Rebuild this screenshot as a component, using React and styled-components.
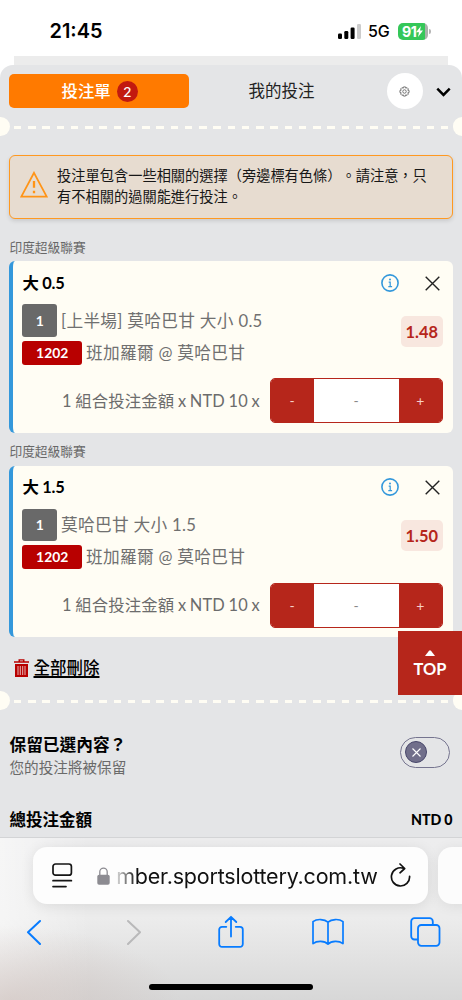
import React from "react";
import styled, { createGlobalStyle } from "styled-components";

const GlobalStyle = createGlobalStyle`
  *, *::before, *::after { box-sizing: border-box; }
  body { margin: 0; background: #fff; }
  button, input { font: inherit; border: 0; padding: 0; background: none; }
  svg { display: block; flex: none; }
`;

const cream = "#fffdf4";
const red = "#b6261b";

const Screen = styled.main`
  position: relative;
  width: 462px;
  height: 1000px;
  overflow: hidden;
  display: flex;
  flex-direction: column;
  background: #fff;
  color: #000;
  font-family: Lato, "Noto Sans CJK TC", sans-serif;
`;

const StatusBar = styled.header`
  height: 56px;
  flex: none;
  display: flex;
  justify-content: space-between;
  align-items: flex-start;
  padding: 18px 31px 0 49.5px;
  font-family: Inter, sans-serif;
`;

const Clock = styled.time`
  font-size: 19.9px;
  line-height: 26px;
  font-weight: 600;
  letter-spacing: 0;
`;

const StatusRight = styled.div`
  display: flex;
  align-items: center;
  height: 26px;
`;

const Network = styled.span`
  width: 22px;
  margin: 0 8px 0 7.5px;
  font-size: 16px;
  font-weight: 500;
  letter-spacing: -0.1px;
  white-space: nowrap;
`;

const Battery = styled.div`
  display: flex;
  align-items: center;
  gap: 1px;
`;

const BatteryBody = styled.div`
  width: 30px;
  height: 17px;
  padding-left: 4px;
  display: flex;
  align-items: center;
  border-radius: 5px;
  background: linear-gradient(90deg, #35c759 27px, #a9b2ab 27px);
  color: #fff;
  font-size: 14.2px;
  font-weight: 700;
  letter-spacing: -0.5px;
`;

const BatteryTip = styled.div`
  width: 2px;
  height: 5px;
  border-radius: 0 2px 2px 0;
  background: #b5b5b5;
`;

const BackSheet = styled.div`
  height: 9px;
  flex: none;
  margin: 0 14px;
  background: #ececec;
`;

const Slip = styled.section`
  height: 772px;
  flex: none;
  border-radius: 13px 13px 0 0;
  background: #e4e5e7;
`;

const Tabs = styled.nav`
  display: flex;
  align-items: center;
  height: 52px;
  padding: 0 10px 0 9.3px;
`;

const ActiveTab = styled.button`
  display: flex;
  align-items: center;
  justify-content: center;
  gap: 6px;
  width: 179.7px;
  height: 33.5px;
  padding-left: 1px;
  border-radius: 5px;
  background: #ff7a00;
  color: #fff;
  font-size: 16.4px;
  line-height: 24px;
  font-weight: 500;
`;

const Count = styled.span`
  width: 21px;
  height: 21px;
  border-radius: 50%;
  background: #c2190f;
  font-size: 14px;
  line-height: 21px;
  font-weight: 500;
`;

const Tab = styled.button`
  width: 185px;
  height: 34px;
  color: #222;
  font-size: 16.5px;
  line-height: 34px;
`;

const SettingsButton = styled.button`
  width: 36px;
  height: 36px;
  margin: 0 13px 0 13px;
  display: grid;
  place-items: center;
  border-radius: 50%;
  background: #fff;
`;

const Perforation = styled.div`
  height: 19px;
  display: flex;
  align-items: center;
  justify-content: space-between;
`;

const Notch = styled.i`
  width: 9.5px;
  height: 19px;
  border-radius: ${(p) => (p.$right ? "10px 0 0 10px" : "0 10px 10px 0")};
  background: ${cream};
`;

const Dashes = styled.i`
  width: 434px;
  height: 3px;
  margin: 2px 0 0 0;
  background: repeating-linear-gradient(90deg, ${cream} 0 7.5px, transparent 7.5px 14.24px);
`;

const Alert = styled.aside`
  display: flex;
  align-items: flex-start;
  gap: 9px;
  height: 64.3px;
  margin: 18.7px 9.3px 0;
  padding: 9.2px 0 0 9.8px;
  border: 1.5px solid #ff9921;
  border-radius: 6px;
  background: #e7dcd0;
  box-shadow: 0 2px 4px rgba(0, 0, 0, 0.12);
  color: #171717;
  font-size: 14.22px;
  line-height: 21.3px;
  text-spacing-trim: space-all;
  font-feature-settings: "chws" 0, "halt" 0;

  svg { margin-top: 6.5px; }
  p { margin: 0; white-space: nowrap; }
`;

const League = styled.h3`
  margin: ${(p) => (p.$first ? "18.8px" : "9px")} 0 4.7px 9.5px;
  height: 19px;
  color: #686868;
  font-size: 12.7px;
  line-height: 19px;
  font-weight: 400;
`;

const Card = styled.article`
  height: 171.5px;
  margin: 0 9.3px;
  padding: 8.6px 10px 0 9.2px;
  border-left: 4px solid #3498db;
  border-radius: 6px;
  background: ${cream};
`;

const CardHead = styled.div`
  display: flex;
  align-items: center;
  height: 26px;

  strong {
    flex: 1;
    font-size: 16.4px;
    line-height: 26px;
    font-weight: 700;
    letter-spacing: -0.25px;
  }
`;

const CloseIcon = styled.svg`
  margin: 0 2.5px 0 26.5px;
`;

const Details = styled.div`
  display: flex;
  justify-content: space-between;
  margin-top: 8px;
  height: 61px;
`;

const Line = styled.div`
  display: flex;
  align-items: center;
  height: ${(p) => (p.$tall ? "33px" : "24px")};
  margin-bottom: 4px;
  color: #707070;
  font-size: 16.7px;
  line-height: 24px;
  letter-spacing: 0.3px;
  white-space: nowrap;
`;

const Tag = styled.span`
  width: ${(p) => (p.$red ? "59.5px" : "34.5px")};
  height: ${(p) => (p.$red ? "24px" : "32.5px")};
  margin-right: 4px;
  display: grid;
  place-items: center;
  border-radius: 3px;
  background: ${(p) => (p.$red ? "#b80000" : "#696969")};
  color: #fff;
  font-size: 13.9px;
  font-weight: 700;
  letter-spacing: 0;
`;

const Odds = styled.span`
  width: 42px;
  height: 31px;
  margin-top: 12px;
  border-radius: 5px;
  background: #f8e7df;
  color: ${red};
  font-size: 16.4px;
  line-height: 31px;
  font-weight: 700;
  text-align: center;
`;

const StakeRow = styled.div`
  display: flex;
  align-items: center;
  justify-content: flex-end;
  gap: 10px;
  margin-top: 13.4px;
  color: #6c6c6c;
  font-size: 16.4px;
  line-height: 24px;
  letter-spacing: 0.1px;
  word-spacing: -0.6px;
  white-space: nowrap;
`;

const Stepper = styled.div`
  width: 173px;
  height: 45px;
  display: grid;
  grid-template-columns: 43px 1fr 43px;
  overflow: hidden;
  border: 1px solid ${red};
  border-radius: 5px;
  background: #fff;
  text-align: center;
  font-size: 14px;
  line-height: 43px;
  color: #888;

  button { background: ${red}; color: #f6cfc8; }
`;

const DeleteAll = styled.button`
  display: flex;
  align-items: center;
  gap: 4.5px;
  height: 26px;
  margin: 17.5px 0 10.4px 14px;
  font-size: 16.5px;
  line-height: 26px;
  font-weight: 500;

  span { text-decoration: underline; text-decoration-thickness: 1.5px; text-underline-offset: 2px; }
`;

const KeepRow = styled.div`
  display: flex;
  justify-content: space-between;
  padding: 0 12px 0 9.5px;
  margin-top: 23px;
  height: 52px;

  h4 { margin: 0; padding-top: 1px; font-size: 16.7px; line-height: 23.5px; font-weight: 600; }
  p { margin: 0; color: #6a6a6a; font-size: 14.6px; line-height: 20.5px; }
`;

const Toggle = styled.div`
  width: 50px;
  height: 31px;
  margin-top: 3.6px;
  padding: 3.5px 4px;
  border: 1px solid #75748f;
  border-radius: 16px;
`;

const Knob = styled.div`
  width: 22px;
  height: 22px;
  display: grid;
  place-items: center;
  border: 1px solid #48476b;
  border-radius: 50%;
  background: #716f8b;
`;

const TotalRow = styled.div`
  display: flex;
  justify-content: space-between;
  align-items: center;
  margin-top: 21.8px;
  padding: 0 9.5px;
  height: 26px;
  font-size: 16.5px;
  line-height: 26px;
  font-weight: 700;

  b { font-size: 14.2px; letter-spacing: -0.1px; }
`;

const TopButton = styled.button`
  position: absolute;
  left: 398px;
  top: 631px;
  width: 64px;
  height: 64.4px;
  display: flex;
  flex-direction: column;
  align-items: center;
  padding-top: 19px;
  background: ${red};
  color: #fff;
  font-size: 16.4px;
  line-height: 20px;
  font-weight: 700;

  svg { margin-bottom: 3px; }
`;

const Browser = styled.footer`
  flex: 1;
  border-top: 1px solid #d3d4d6;
  background:
    radial-gradient(ellipse 170px 75px at 10px 163px, rgba(205, 190, 185, 0.6), transparent),
    linear-gradient(90deg, rgba(255, 255, 255, 0.5), transparent 90px),
    linear-gradient(#ededee 0, #ececec 80px, #d7d7d7 162px);
`;

const AddressRow = styled.div`
  display: flex;
  gap: 10px;
  padding: 9.2px 0 0 33.2px;
`;

const Address = styled.div`
  width: 395px;
  height: 57px;
  flex: none;
  display: flex;
  align-items: center;
  padding: 0 17px 0 19px;
  border-radius: 14px;
  background: #fdfdfd;
  box-shadow: 0 2px 14px rgba(0, 0, 0, 0.09);
`;

const NextPage = styled.div`
  width: 60px;
  height: 57px;
  flex: none;
  border-radius: 14px;
  background: #fcfcfc;
  box-shadow: 0 2px 14px rgba(0, 0, 0, 0.07);
`;

const LockIcon = styled.svg`
  margin-left: 23.5px;
`;

const Url = styled.span`
  flex: 1;
  margin-left: 6.5px;
  font-family: Inter, sans-serif;
  font-size: 21.5px;
  line-height: 28px;
  letter-spacing: -0.2px;
  white-space: nowrap;
  color: transparent;
  background: linear-gradient(90deg, #ddd 0, #111 21px);
  background-clip: text;
`;

const Toolbar = styled.nav`
  display: grid;
  grid-template-columns: 100px 98px 97px 97px 98px;
  justify-items: center;
  align-items: center;
  width: 490px;
  height: 40px;
  margin: 8px 0 0 -16px;
`;

const HomeIndicator = styled.div`
  width: 164px;
  height: 6px;
  margin: 32px 0 0 149px;
  border-radius: 3px;
  background: #000;
`;

const Bars = () => (
  <svg width="23" height="15" viewBox="0 0 23 15">
    <rect x="0" y="9.5" width="4" height="5.5" rx="1.2" />
    <rect x="6.3" y="7" width="4" height="8" rx="1.2" />
    <rect x="12.6" y="3.5" width="4" height="11.5" rx="1.2" />
    <rect x="19" y="0" width="4" height="15" rx="1.2" fill="#ccc" />
  </svg>
);

const Gear = () => (
  <svg width="11" height="11" viewBox="0 0 24 24" fill="none" stroke="#555" strokeWidth="1.7" strokeLinejoin="round">
    <path d="M9.8 2h4.4l.7 3 2.6-1.6 3.1 3.1L19 9.1l3 .7v4.4l-3 .7 1.6 2.6-3.1 3.1-2.6-1.6-.7 3H9.8l-.7-3-2.6 1.6-3.1-3.1L5 14.9l-3-.7V9.8l3-.7-1.6-2.6 3.1-3.1L9.1 5z" />
    <circle cx="12" cy="12" r="3.8" />
  </svg>
);

const ChevronIcon = styled.svg`
  margin-top: 2px;
`;

const Chevron = () => (
  <ChevronIcon width="15" height="10" viewBox="0 0 15 10" fill="none" stroke="#000" strokeWidth="2.5">
    <path d="M1.3 1.7 7.5 7.9l6.2-6.2" />
  </ChevronIcon>
);

const Warning = () => (
  <svg width="28" height="27" viewBox="0 0 28 27" fill="none" stroke="#ff9417" strokeWidth="1.8">
    <path d="M14 1.8 26.7 25.7H1.3z" />
    <path d="M14 10v6.8M14 19.8v2.4" strokeWidth="2.3" />
  </svg>
);

const Info = () => (
  <svg width="18" height="18" viewBox="0 0 18 18" fill="none" stroke="#3498db">
    <circle cx="9" cy="9" r="8.1" strokeWidth="1.6" />
    <path d="M7.7 8.1h1.5v4.6M7.3 12.7h3.8" strokeWidth="1.2" />
    <circle cx="9" cy="5.4" r="1" fill="#3498db" stroke="none" />
  </svg>
);

const Trash = () => (
  <svg width="15" height="18" viewBox="0 0 15 18" fill="#b80000">
    <path d="M4.5 2.2V.2h6v2H15v1.5H0V2.2zM6 1.5v.7h3v-.7zM1 5h13v13H1z" fillRule="evenodd" />
    <path d="M4 7v9M6.3 7v9M8.7 7v9M11 7v9" stroke="#e9c8c8" strokeWidth=".9" />
  </svg>
);

function Bet({ title, market }) {
  return (
    <Card>
      <CardHead>
        <strong>{title}</strong>
        <Info />
        <CloseIcon width="15" height="15" viewBox="0 0 15 15" stroke="#222" strokeWidth="1.4">
          <path d="m.7.7 13.6 13.6M14.3.7.7 14.3" />
        </CloseIcon>
      </CardHead>
      <Details>
        <div>
          <Line $tall><Tag>1</Tag>{market.name}</Line>
          <Line><Tag $red>1202</Tag>班加羅爾 @ 莫哈巴甘</Line>
        </div>
        <Odds>{market.odds}</Odds>
      </Details>
      <StakeRow>
        <span>1 組合投注金額 x NTD 10 x</span>
        <Stepper>
          <button>-</button>
          <span>-</span>
          <button>+</button>
        </Stepper>
      </StakeRow>
    </Card>
  );
}

const Divider = () => (
  <Perforation>
    <Notch />
    <Dashes />
    <Notch $right />
  </Perforation>
);

export default function App() {
  return (
    <Screen>
      <GlobalStyle />
      <StatusBar>
        <Clock>21:45</Clock>
        <StatusRight>
          <Bars />
          <Network>5G</Network>
          <Battery>
            <BatteryBody>
              91
              <svg width="7" height="11" viewBox="0 0 7 11" fill="#fff"><path d="M5 0 0 6.2h3L2 11l5-6.4H4z" /></svg>
            </BatteryBody>
            <BatteryTip />
          </Battery>
        </StatusRight>
      </StatusBar>
      <BackSheet />
      <Slip>
        <Tabs>
          <ActiveTab>投注單<Count>2</Count></ActiveTab>
          <Tab>我的投注</Tab>
          <SettingsButton><Gear /></SettingsButton>
          <Chevron />
        </Tabs>
        <Divider />
        <Alert>
          <Warning />
          <p>投注單包含一些相關的選擇（旁邊標有色條）。請注意，只<br />有不相關的過關能進行投注。</p>
        </Alert>
        <League $first>印度超級聯賽</League>
        <Bet title="大 0.5" market={{ name: "[上半場] 莫哈巴甘 大小 0.5", odds: "1.48" }} />
        <League>印度超級聯賽</League>
        <Bet title="大 1.5" market={{ name: "莫哈巴甘 大小 1.5", odds: "1.50" }} />
        <DeleteAll><Trash /><span>全部刪除</span></DeleteAll>
        <Divider />
        <KeepRow>
          <div>
            <h4>保留已選內容？</h4>
            <p>您的投注將被保留</p>
          </div>
          <Toggle>
            <Knob>
              <svg width="9" height="9" viewBox="0 0 9 9" stroke="#fff" strokeWidth="1.1"><path d="m.5.5 8 8M8.5.5l-8 8" /></svg>
            </Knob>
          </Toggle>
        </KeepRow>
        <TotalRow><span>總投注金額</span><b>NTD 0</b></TotalRow>
      </Slip>
      <Browser>
        <AddressRow>
          <Address>
            <svg width="21" height="25" viewBox="0 0 21 25" fill="none" stroke="#151515" strokeWidth="1.7" strokeLinecap="round">
              <rect x="1" y="1" width="18.4" height="11.2" rx="2.5" />
              <path d="M1 17.7h18.4M1 23.6h13" />
            </svg>
            <LockIcon width="13" height="18" viewBox="0 0 13 18">
              <path d="M2.8 8.5V4.8a3.7 3.7 0 0 1 7.4 0v3.7" fill="none" stroke="#8c8b91" strokeWidth="1.3" />
              <rect x=".3" y="7.8" width="12.4" height="10" rx="1.8" fill="#8c8b91" />
            </LockIcon>
            <Url>mber.sportslottery.com.tw</Url>
            <svg width="21" height="25" viewBox="0 0 21 25" fill="none" stroke="#111" strokeWidth="1.7" strokeLinecap="round" strokeLinejoin="round">
              <path d="M13.5 5.3A9.1 9.1 0 1 0 19.6 13.4M10 1l4.7 4.5L10 9.8" />
            </svg>
          </Address>
          <NextPage />
        </AddressRow>
        <Toolbar>
          <svg width="20" height="26" viewBox="0 0 20 26" fill="none" stroke="#087cff" strokeWidth="2" strokeLinecap="round" strokeLinejoin="round"><path d="M16 2 4 13.3 16 25" /></svg>
          <svg width="20" height="26" viewBox="-2 0 20 26" fill="none" stroke="#b9b9ba" strokeWidth="2" strokeLinecap="round" strokeLinejoin="round"><path d="m3 2 12 11.3L3 25" /></svg>
          <svg width="26" height="34" viewBox="0 0 26 34" fill="none" stroke="#087cff" strokeWidth="1.8" strokeLinecap="round" strokeLinejoin="round">
            <path d="M8.3 11.8H4a2.8 2.8 0 0 0-2.8 2.8v14.5A2.8 2.8 0 0 0 4 31.9h18a2.8 2.8 0 0 0 2.8-2.8V14.6a2.8 2.8 0 0 0-2.8-2.8h-4.3M13 21.5V2M7.7 7 13 1.8 18.3 7" />
          </svg>
          <svg width="32" height="28" viewBox="0 0 32 28" fill="none" stroke="#087cff" strokeWidth="1.7" strokeLinejoin="round">
            <path d="M16 4.2C12.5.9 5 .6 1 3.6v22c4-3 11.5-3 15 .6 3.5-3.6 11-3.6 15-.6v-22c-4-3-11.5-2.7-15 .6v22" />
          </svg>
          <svg width="31" height="30" viewBox="0 0 31 30" fill="none" stroke="#087cff" strokeWidth="1.8">
            <path d="M8 22.5H4.5A3.3 3.3 0 0 1 1.2 19.2V4.5A3.3 3.3 0 0 1 4.5 1.2h15a3.3 3.3 0 0 1 3.3 3.3V8" />
            <rect x="8" y="8" width="21.5" height="20.8" rx="3.3" />
          </svg>
        </Toolbar>
        <HomeIndicator />
      </Browser>
      <TopButton>
        <svg width="10" height="6" viewBox="0 0 10 6" fill="#fff"><path d="M0 6 4.2 .5h1.6L10 6z" /></svg>
        TOP
      </TopButton>
    </Screen>
  );
}
